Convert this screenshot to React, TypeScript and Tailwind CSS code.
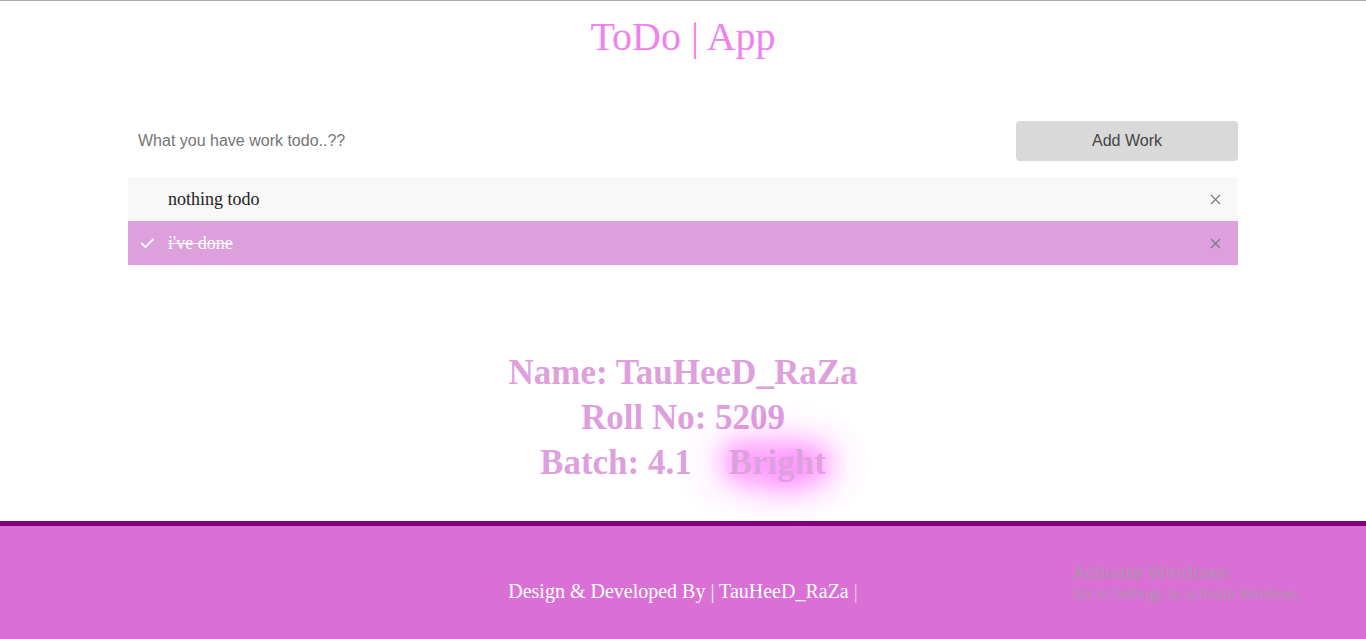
import { X, Check } from "lucide-react";

const todos = [
  { text: "nothing todo", done: false },
  { text: "i've done", done: true },
];

export default function App() {
  return (
    <div className="min-h-[639px] flex flex-col bg-white border-t border-[#ababab] font-['Liberation_Serif',serif]">
      <main className="flex-1">
        <h1 className="text-center text-[40px] leading-[46px] pt-[13px] text-[#ee82ee]">ToDo | App</h1>

        <div className="w-[1110px] mx-auto mt-[61px]">
          {/* input row */}
          <div className="flex items-center gap-4 h-10">
            <input
              className="flex-1 h-10 px-[10px] text-base text-[#555] placeholder:text-[#757575] outline-none font-['Liberation_Sans',sans-serif]"
              placeholder="What you have work todo..??"
            />
            <button className="w-[222px] h-10 rounded bg-[#d9d9d9] text-[#444] text-base font-['Liberation_Sans',sans-serif]">
              Add Work
            </button>
          </div>

          {/* list */}
          <ul className="mt-4">
            {todos.map((t, i) => (
              <li
                key={i}
                className={`flex items-center h-11 pl-[40px] pr-[14px] text-lg relative ${
                  t.done ? "bg-[#dda0dd] text-white line-through" : "bg-[#f8f8f8] text-[#222]"
                }`}
              >
                {t.done && <Check className="absolute left-[11px] w-[17px] h-[17px] text-white" strokeWidth={2.5} />}
                <span className="flex-1">{t.text}</span>
                <X className="w-[17px] h-[17px] text-[#777]" strokeWidth={1.5} />
              </li>
            ))}
          </ul>
        </div>

        {/* info */}
        <div className="mt-[85px] text-center font-bold text-[35px] leading-[45px] text-[#dda0dd]">
          <p>Name: TauHeeD_RaZa</p>
          <p>Roll No: 5209</p>
          <p>
            Batch: 4.1
            <span className="ml-[37px] [text-shadow:0_0_25px_#ff66ff,0_0_30px_#ff66ff,0_0_40px_#ff77ff,0_0_60px_#ff99ff,0_0_100px_#ffbbff]">
              Bright
            </span>
          </p>
        </div>
      </main>

      <footer className="h-[118px] mt-[10px] border-t-[5px] border-[#800080] bg-[#da70d6] flex items-center justify-center pt-[17px] relative">
        <p className="text-white text-xl">
          Design &amp; Developed By | TauHeeD_RaZa <span className="text-[#f0c8ee]">|</span>
        </p>
        <div className="absolute left-[1073px] top-[34px] text-[#ab93a9] font-['Open_Sans',sans-serif] pointer-events-none">
          <p className="text-[19px] leading-6">Activate Windows</p>
          <p className="text-[14px] leading-5">Go to Settings to activate Windows.</p>
        </div>
      </footer>
    </div>
  );
}
